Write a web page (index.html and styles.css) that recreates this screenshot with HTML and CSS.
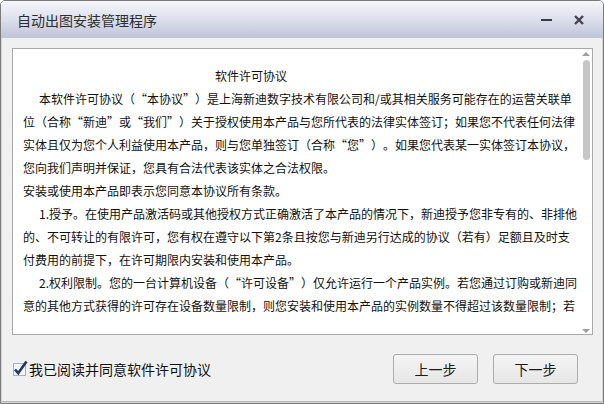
FILE: index.html
```html
<!DOCTYPE html>
<html>

<head lang="zh-CN">
    <meta charset="UTF-8">
    <title>自动出图安装管理程序</title>
    <link rel="stylesheet" href="styles.css">
</head>

<body>
    <div class="window">
        <div class="title-bar">
            <span class="title-text">自动出图安装管理程序</span>
            <div class="title-controls">
                <span class="btn-min"></span>
                <svg class="btn-close" width="10" height="10" viewBox="0 0 10 10">
                    <path d="M1 1 L9 9 M9 1 L1 9" stroke="#43434f" stroke-width="2.4" fill="none" />
                </svg>
            </div>
        </div>

        <div class="main">
            <div class="license-box">
                <div class="doc-view">
                    <div class="doc">
                        <p class="doc-title">软件许可协议</p>
                        <p class="indent">本软件许可协议（“本协议”）是上海新迪数字技术有限公司和/或其相关服务可能存在的运营关联单位（合称“新迪”或“我们”）关于授权使用本产品与您所代表的法律实体签订；如果您不代表任何法律实体且仅为您个人利益使用本产品，则与您单独签订（合称“您”）。如果您代表某一实体签订本协议，您向我们声明并保证，您具有合法代表该实体之合法权限。</p>
                        <p>安装或使用本产品即表示您同意本协议所有条款。</p>
                        <p class="indent">1.授予。在使用产品激活码或其他授权方式正确激活了本产品的情况下，新迪授予您非专有的、非排他的、不可转让的有限许可，您有权在遵守以下第2条且按您与新迪另行达成的协议（若有）足额且及时支付费用的前提下，在许可期限内安装和使用本产品。</p>
                        <p class="indent">2.权利限制。您的一台计算机设备（“许可设备”）仅允许运行一个产品实例。若您通过订购或新迪同意的其他方式获得的许可存在设备数量限制，则您安装和使用本产品的实例数量不得超过该数量限制；若</p>
                    </div>
                </div>
                <!-- scrollbar -->
                <div class="scrollbar">
                    <span class="arrow-up"></span>
                    <span class="thumb"></span>
                    <span class="track"></span>
                    <span class="arrow-down"></span>
                </div>
            </div>
        </div>

        <div class="footer">
            <label class="agree">
                <svg class="check" width="16" height="16" viewBox="0 0 16 16">
                    <rect x="1.5" y="3.5" width="12" height="12" fill="#f3f5f8" stroke="#a3b1c3" stroke-width="1" />
                    <path d="M3 9.5 L6.2 13.2 L14.5 1.5" stroke="#1b3a6c" stroke-width="2.6" fill="none" />
                </svg>
                <span>我已阅读并同意软件许可协议</span>
            </label>
            <div class="buttons">
                <a class="button" href="javascript:;">上一步</a>
                <a class="button" href="javascript:;">下一步</a>
            </div>
        </div>
    </div>
</body>

</html>
```

FILE: styles.css
```css
body,
div,
p,
span,
a,
label {
    padding: 0px;
    margin: 0px;
}

body {
    background: #ffffff;
    font-family: "Noto Sans CJK SC", "Microsoft YaHei", sans-serif;
    text-spacing-trim: space-all;
}

a {
    text-decoration: none;
    color: #1a1a1a;
}

.window {
    width: 604px;
    height: 404px;
    box-sizing: border-box;
    border: #7b7b7b solid 1px;
    border-radius: 5px 5px 0px 0px;
    background: #f0f0f0;
    box-shadow: inset 0px 0px 0px 1px #d4d4d4, inset 0px -2px 0px 0px #b8b8b8;
    display: flex;
    flex-direction: column;
    overflow: hidden;
}

.title-bar {
    height: 37px;
    flex-shrink: 0;
    display: flex;
    align-items: center;
    justify-content: space-between;
    padding: 0px 19px 0px 16px;
    background: linear-gradient(#f5f6fb, #dfe2ee 45%, #bec3d8);
}

.title-text {
    font-size: 14px;
    color: #2e2e2e;
    line-height: 20px;
}

.title-controls {
    display: flex;
    align-items: center;
}

.btn-min {
    display: block;
    width: 11px;
    height: 2px;
    background: #3b3b47;
}

.btn-close {
    display: block;
    margin-left: 22px;
}

.main {
    padding: 10px 10px 0px 11px;
}

.license-box {
    height: 287px;
    box-sizing: border-box;
    border: #a9a9a9 solid 1px;
    background: #ffffff;
    display: flex;
}

.doc-view {
    flex: 1;
    padding: 15px 0px 0px 10px;
}

.doc {
    width: 556px;
    height: 257px;
    overflow: hidden;
    font-size: 12px;
    line-height: 23px;
    color: #111111;
}

.doc-title {
    padding-left: 192px;
}

.indent {
    text-indent: 16px;
}

.scrollbar {
    width: 12px;
    display: flex;
    flex-direction: column;
    align-items: center;
    padding: 2px 0px 1px 0px;
}

.arrow-up {
    width: 0px;
    height: 0px;
    border-left: 4px solid transparent;
    border-right: 4px solid transparent;
    border-bottom: 4px solid #9e9e9e;
    margin-top: 1px;
}

.thumb {
    width: 7px;
    height: 100px;
    margin-top: 4px;
    border-radius: 4px;
    background: #c6c6c6;
}

.track {
    flex: 1;
}

.arrow-down {
    width: 0px;
    height: 0px;
    border-left: 4px solid transparent;
    border-right: 4px solid transparent;
    border-top: 4px solid #9e9e9e;
}

.footer {
    flex: 1;
    display: flex;
    align-items: flex-start;
    justify-content: space-between;
    padding: 19px 25px 0px 11px;
}

.agree {
    display: flex;
    align-items: center;
    height: 30px;
    font-size: 14px;
    color: #111111;
}

.check {
    display: block;
    margin-top: -3px;
    margin-right: 1px;
}

.buttons {
    display: flex;
    gap: 15px;
}

.button {
    display: block;
    width: 85px;
    height: 30px;
    box-sizing: border-box;
    border: #acacac 1px solid;
    border-radius: 3px;
    background: linear-gradient(#f4f4f4, #e6e6e6);
    font-size: 14px;
    line-height: 28px;
    text-align: center;
}
```
